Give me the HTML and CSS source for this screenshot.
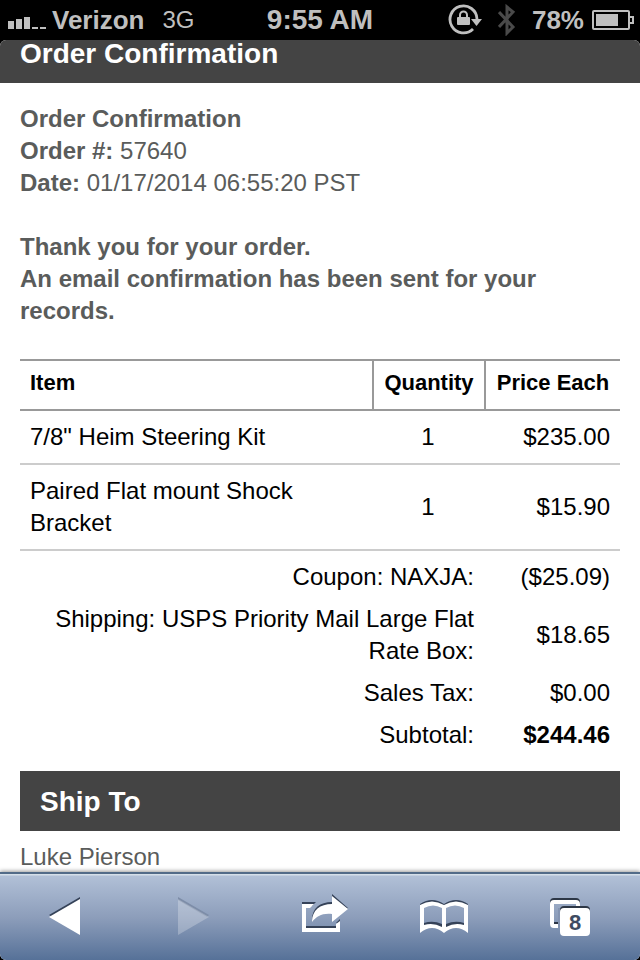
FILE: index.html
```html
<!DOCTYPE html>
<html lang="en">
<head>
<meta charset="utf-8">
<meta name="viewport" content="width=device-width, initial-scale=1">
<title>Order Confirmation</title>
<link rel="stylesheet" href="styles.css">
</head>
<body>
<header class="status">
  <div class="status-left">
    <svg class="signal" width="38" height="14" viewBox="0 0 38 14" aria-hidden="true">
      <path d="M0 6h6v8H0zM8 4h6v10H8zM16 2h6v12h-6zM24 12h6v2h-6zM32 12h6v2h-6z"/>
    </svg>
    <span class="carrier">Verizon</span>
    <span class="network">3G</span>
  </div>
  <time class="clock">9:55 AM</time>
  <div class="status-right">
    <svg width="34" height="32" viewBox="0 0 34 32" aria-hidden="true">
      <path d="M25 25A13.500 13.500 0 1 1 29 15" fill="none" stroke="#bfbfbf" stroke-width="2.800"/>
      <path d="M23 15h11l-5.500 7z" fill="#bfbfbf"/>
      <rect x="9" y="13" width="13" height="8" rx="1" fill="#bfbfbf"/>
      <path d="M12 14v-3a3.500 3.500 0 0 1 7 0V14" fill="none" stroke="#bfbfbf" stroke-width="2"/>
    </svg>
    <svg class="bluetooth" width="18" height="32" viewBox="0 0 18 32" aria-hidden="true">
      <path d="M1 8l14 15-6 6V3l6 5L1 23" fill="none" stroke="#4a4a4a" stroke-width="3"/>
    </svg>
    <span class="charge">78%</span>
    <svg width="42" height="20" viewBox="0 0 42 20" aria-hidden="true">
      <rect x="1" y="1" width="36" height="18" rx="1" fill="none" stroke="#bfbfbf" stroke-width="2"/>
      <rect x="4" y="4" width="22" height="12" fill="#bfbfbf"/>
      <path d="M38 7h3v6h-3" fill="none" stroke="#bfbfbf" stroke-width="2"/>
    </svg>
  </div>
</header>

<div class="screen">
  <main class="page">
    <h1 class="title">Order Confirmation</h1>
    <div class="content">
      <p class="details">
        <strong>Order Confirmation</strong><br>
        <strong>Order #:</strong> 57640<br>
        <strong>Date:</strong> 01/17/2014 06:55:20 PST
      </p>
      <p class="details"><strong>Thank you for your order.<br>An email confirmation has been sent for your records.</strong></p>
      <table class="order">
        <thead>
          <tr><th class="item" scope="col">Item</th><th class="qty" scope="col">Quantity</th><th class="price" scope="col">Price Each</th></tr>
        </thead>
        <tbody>
          <tr><td class="item">7/8" Heim Steering Kit</td><td class="qty">1</td><td class="price">$235.00</td></tr>
          <tr><td class="item">Paired Flat mount Shock Bracket</td><td class="qty">1</td><td class="price">$15.90</td></tr>
        </tbody>
        <tfoot>
          <tr><td colspan="2">Coupon: NAXJA:</td><td>($25.09)</td></tr>
          <tr><td colspan="2">Shipping: USPS Priority Mail Large Flat Rate Box:</td><td>$18.65</td></tr>
          <tr><td colspan="2">Sales Tax:</td><td>$0.00</td></tr>
          <tr><td colspan="2">Subtotal:</td><td><strong>$244.46</strong></td></tr>
        </tfoot>
      </table>
      <h2 class="section">Ship To</h2>
      <address class="address">Luke Pierson</address>
    </div>
  </main>

  <nav class="toolbar" aria-label="Browser">
    <button type="button" aria-label="Back">
      <svg viewBox="0 874 128 86" aria-hidden="true">
        <path d="M80 897v36L49 915z" fill="#354258"/>
        <path d="M80 899v36L49 917z" fill="#fff"/>
      </svg>
    </button>
    <button type="button" aria-label="Forward" disabled>
      <svg viewBox="128 874 128 86" aria-hidden="true">
        <path d="M178 897l31 18-2 2-29-17z" fill="#7d8da8"/>
        <path d="M178 899v36l31-18z" fill="#fff" fill-opacity=".25"/>
      </svg>
    </button>
    <button type="button" aria-label="Share">
      <svg viewBox="256 874 128 86" aria-hidden="true">
        <g fill="#354258">
          <path d="M302 902h14l-4 4h-10zM306 926h30v3h-30zM336 923l4-4v4z"/>
          <path d="M332 894l16 14-16 12v-8c-10-1-15 2-20 8 0-12 8-18 20-18z"/>
        </g>
        <g fill="#fff">
          <path d="M302 904h12l-4 4h-4v20h30v-4l4-3v11h-38z"/>
          <path d="M332 896l16 13-16 13v-8c-10-1-15 2-20 8 0-12 8-18 20-18z"/>
        </g>
      </svg>
    </button>
    <button type="button" aria-label="Bookmarks">
      <svg viewBox="384 874 128 86" aria-hidden="true">
        <path fill="#354258" fill-rule="evenodd" d="M420 904q12-8 24 0q12-8 24 0v27q-12-8-24 0q-12-8-24 0zM424 905v18q9-3 18 1v-18q-9-5-18-1zM446 906v18q9-4 18-1v-18q-9-4-18 1z"/>
        <path fill="#fff" fill-rule="evenodd" d="M420 905q12-7 24 0q12-7 24 0v28q-12-10-24 0q-12-10-24 0zM424 908v17q9-3 18 2v-19q-9-5-18 0zM446 908v19q9-5 18-2v-17q-9-5-18 0z"/>
      </svg>
    </button>
    <button type="button" aria-label="Pages, 8 open">
      <svg viewBox="512 874 128 86" aria-hidden="true">
        <rect x="552" y="900" width="26" height="25" rx="2" fill="none" stroke="#2d3746" stroke-width="4"/>
        <rect x="552" y="902" width="26" height="24" rx="2" fill="none" stroke="#fff" stroke-width="4"/>
        <path d="M558 908h20v20h-20z" fill="#8494b1"/>
        <path d="M554 922h4v2h-4z" fill="#2d3746"/>
        <rect x="560" y="906" width="30" height="28" rx="4" fill="#2d3746"/>
        <rect x="560" y="908" width="30" height="28" rx="4" fill="#fff"/>
        <text class="count" x="575" y="930" text-anchor="middle">8</text>
      </svg>
    </button>
  </nav>
</div>
</body>
</html>
```

FILE: styles.css
```css
* {
  box-sizing: border-box;
}

body {
  margin: 0;
  height: 100vh;
  display: flex;
  flex-direction: column;
  overflow: hidden;
  background: #000;
  font: 24px/32px "Liberation Sans", Arial, sans-serif;
  color: #000;
}

.status {
  flex: none;
  height: 40px;
  padding: 0 6px;
  display: grid;
  grid-template-columns: 1fr auto 1fr;
  align-items: center;
  color: #bfbfbf;
  font-size: 26px;
  font-weight: bold;
}

.status-left,
.status-right {
  display: flex;
  align-items: center;
}

.status-right {
  justify-content: flex-end;
}

.signal {
  fill: #bfbfbf;
  margin: 4px 6px 0 2px;
}

.network {
  margin-left: 18px;
  font-size: 24px;
  font-weight: normal;
}

.clock {
  font-size: 28px;
}

.bluetooth {
  margin: 0 16px;
}

.charge {
  margin-right: 8px;
}

.screen {
  flex: 1;
  min-height: 0;
  display: flex;
  flex-direction: column;
  overflow: hidden;
  border-radius: 6px;
  background: #fff;
}

.page {
  flex: 1;
  min-height: 0;
  overflow: hidden;
}

.title,
.section {
  margin: 0;
  background: #444;
  color: #fff;
  font-size: 28px;
  line-height: 28px;
}

.title {
  padding: 0 20px 15px;
}

.content {
  padding: 20px;
}

.details {
  margin: 0 0 32px;
  color: #5a5c5b;
}

.order {
  width: 100%;
  border-collapse: separate;
  border-spacing: 0;
}

.order th,
.order td {
  padding: 10px;
}

.order th {
  padding: 8px 10px 12px;
  border-top: 2px solid #999;
  border-bottom: 2px solid #999;
  font-size: 22px;
  line-height: 28px;
}

.order th + th {
  border-left: 2px solid #999;
}

.order tbody td {
  border-bottom: 2px solid #ccc;
}

.order .item {
  text-align: left;
}

.order .qty {
  width: 112px;
  text-align: center;
}

.order .price {
  width: 136px;
  text-align: right;
  white-space: nowrap;
}

.order th.price {
  text-align: center;
}

.order tfoot td {
  padding: 5px 10px;
  text-align: right;
}

.order tfoot tr:first-child td {
  padding-top: 10px;
}

.section {
  margin: 15px 0 10px;
  padding: 17px 20px 15px;
}

.address {
  color: #5a5c5b;
  font-style: normal;
}

.toolbar {
  flex: none;
  display: grid;
  grid-template-columns: repeat(5, 1fr);
  position: relative;
  border-top: 2px solid #526b88;
  background: linear-gradient(#d5dfe9 0, #d5dfe9 1px, #b1c0d7 2px, #8c9dba 44px, #567198 100%);
  box-shadow: 0 -1px 4px rgba(0, 0, 0, 0.4);
}

.toolbar button {
  height: 86px;
  margin: 0;
  padding: 0;
  border: 0;
  background: none;
}

.toolbar svg {
  display: block;
  width: 100%;
  height: 86px;
}

.count {
  font: bold 22px "Liberation Sans", Arial, sans-serif;
  fill: #3e4b61;
}
```
